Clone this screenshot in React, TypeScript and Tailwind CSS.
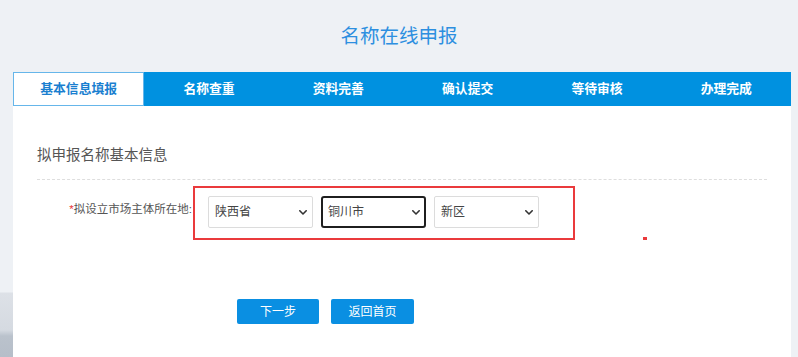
import React from "react";

const tabs = ["基本信息填报", "名称查重", "资料完善", "确认提交", "等待审核", "办理完成"];

function Chevron() {
  return (
    <svg width="8" height="5" viewBox="0 0 8 5" className="shrink-0">
      <path d="M0.8 0.8 L4 4 L7.2 0.8" fill="none" stroke="#333" strokeWidth="1.6" strokeLinecap="round" strokeLinejoin="round" />
    </svg>
  );
}

function FakeSelect({ value, focused }: { value: string; focused?: boolean }) {
  return (
    <div
      className={
        "w-[105px] h-[32px] flex items-center justify-between bg-white text-[12px] text-[#444] " +
        (focused ? "border-2 border-[#1f1f1f] rounded-[3px] pl-[5px] pr-[4px]" : "border border-[#dcdcdc] rounded-[2px] pl-[6px] pr-[5px]")
      }
    >
      <span>{value}</span>
      <Chevron />
    </div>
  );
}

export default function App() {
  return (
    <div
      className="w-[798px] h-[357px] overflow-hidden bg-[#eef1f5] bg-no-repeat bg-[length:13px_357px] bg-[linear-gradient(to_bottom,#eef1f5_0px,#eef1f5_292px,#dde1e7_293px,#d5dae1_330px,#bac2cc_336px,#b6bec9_357px)]"
      style={{ fontFamily: "'Liberation Sans', 'Noto Sans CJK SC', sans-serif" }}
    >
      <div className="h-[72px] flex items-center justify-center pt-[2px]">
        <h1 className="text-[19.5px] text-[#2d8fe0] font-normal">名称在线申报</h1>
      </div>
      <div className="ml-[13px] w-[778px]">
        <div className="flex h-[34px] bg-[#0091e0]">
          {tabs.map((t, i) => (
            <div
              key={t}
              className={
                "flex-1 flex items-center justify-center text-[12.8px] font-bold " +
                (i === 0 ? "bg-white border border-[#66b6ea] text-[#1a7fd0]" : "text-white")
              }
            >
              {t}
            </div>
          ))}
        </div>
        <div className="relative bg-white h-[260px] pl-[24px] pr-[24px] pt-[39px]">
          <div className="h-[20px] leading-[20px] text-[14.5px] text-[#555]">拟申报名称基本信息</div>
          <div className="mt-[14px] border-t border-dashed border-[#dedede]" />
          <div className="mt-[6px] flex items-center">
            <div className="w-[156px] pr-[1px] text-right text-[11.5px] text-[#555] -mt-[6px] whitespace-nowrap">
              <span className="text-[#e8363a]">*</span>拟设立市场主体所在地:
            </div>
            <div className="border-2 border-[#ea3a3c] pl-[13px] pr-[34px] pt-[8px] pb-[10px] flex gap-[8px]">
              <FakeSelect value="陕西省" />
              <FakeSelect value="铜川市" focused />
              <FakeSelect value="新区" />
            </div>
          </div>
          <div className="absolute left-[630px] top-[131px] w-[4px] h-[3px] bg-[#ea3a3c]" />
          <div className="mt-[59px] ml-[200px] flex gap-[12px]">
            <button className="w-[82px] h-[25px] bg-[#0a8fe2] rounded-[2px] text-white text-[12px] flex items-center justify-center">
              下一步
            </button>
            <button className="w-[83px] h-[25px] bg-[#0a8fe2] rounded-[2px] text-white text-[12px] flex items-center justify-center">
              返回首页
            </button>
          </div>
        </div>
      </div>
    </div>
  );
}
